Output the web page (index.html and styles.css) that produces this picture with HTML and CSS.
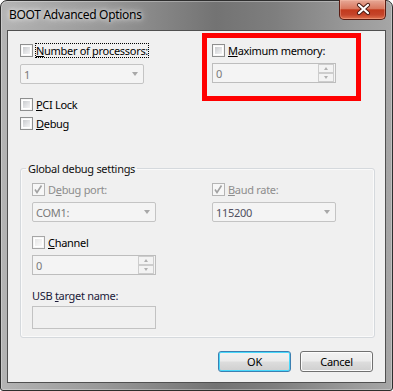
FILE: index.html
```html
<!DOCTYPE html>
<html lang="en">
<head>
    <meta charset="UTF-8">
    <title>BOOT Advanced Options</title>
    <link rel="stylesheet" href="styles.css">
</head>
<body>
    <div class="window">
        <div class="titlebar">
            <span class="title">BOOT Advanced Options</span>
            <div class="close">
                <svg width="45" height="19" viewBox="0 0 45 19">
                    <path d="M19 5 L28 13 M28 5 L19 13" stroke="#4a1c14" stroke-width="4.2" stroke-linecap="round" fill="none"/>
                    <path d="M19 5 L28 13 M28 5 L19 13" stroke="#ffffff" stroke-width="2.2" stroke-linecap="round" fill="none"/>
                </svg>
            </div>
        </div>
        <div class="client">
            <div class="top-row">
                <div class="col-left">
                    <label class="check">
                        <span class="box"></span>
                        <span class="text focus"><u>N</u>umber of processors:</span>
                    </label>
                    <div class="combo gap6">
                        <span>1</span>
                        <i class="arrow"></i>
                    </div>
                    <label class="check gap13">
                        <span class="box"></span>
                        <span class="text"><u>P</u>CI Lock</span>
                    </label>
                    <label class="check gap4">
                        <span class="box"></span>
                        <span class="text"><u>D</u>ebug</span>
                    </label>
                </div>
                <div class="highlight">
                    <label class="check">
                        <span class="box"></span>
                        <span class="text"><u>M</u>aximum memory:</span>
                    </label>
                    <div class="spin gap5">
                        <span>0</span>
                        <span class="spin-btns">
                            <i class="up"></i>
                            <i class="down"></i>
                        </span>
                    </div>
                </div>
            </div>

            <fieldset class="group">
                <legend>Global debug settings</legend>
                <div class="group-grid">
                    <div class="col">
                        <label class="check disabled">
                            <span class="box checked">
                                <svg width="11" height="11" viewBox="0 0 11 11"><path d="M2 5.5 L4 8.5 L8.5 1.5" stroke="#a2a2a2" stroke-width="1.6" fill="none"/></svg>
                            </span>
                            <span class="text">D<u>e</u>bug port:</span>
                        </label>
                        <div class="combo gap5">
                            <span>COM1:</span>
                            <i class="arrow"></i>
                        </div>
                        <label class="check gap13">
                            <span class="box light"></span>
                            <span class="text"><u>C</u>hannel</span>
                        </label>
                        <div class="spin gap5">
                            <span>0</span>
                            <span class="spin-btns">
                                <i class="up"></i>
                                <i class="down"></i>
                            </span>
                        </div>
                        <div class="label gap13">USB <u>t</u>arget name:</div>
                        <div class="textbox"></div>
                    </div>
                    <div class="col">
                        <label class="check disabled">
                            <span class="box checked">
                                <svg width="11" height="11" viewBox="0 0 11 11"><path d="M2 5.5 L4 8.5 L8.5 1.5" stroke="#a2a2a2" stroke-width="1.6" fill="none"/></svg>
                            </span>
                            <span class="text"><u>B</u>aud rate:</span>
                        </label>
                        <div class="combo gap5 dark">
                            <span>115200</span>
                            <i class="arrow"></i>
                        </div>
                    </div>
                </div>
            </fieldset>

            <div class="buttons">
                <button class="btn default">OK</button>
                <button class="btn">Cancel</button>
            </div>
        </div>
    </div>
</body>
</html>
```

FILE: styles.css
```css
* {
    box-sizing: border-box;
}
body {
    margin: 0;
    padding: 0;
    background: #ffffff;
    font-family: "Noto Sans", "Open Sans", sans-serif;
    font-size: 11px;
    letter-spacing: -0.3px;
    color: #000;
}
u {
    text-decoration: underline;
    text-underline-offset: 1px;
}
.window {
    width: 393px;
    height: 391px;
    border: 1px solid #2e2e2e;
    border-radius: 7px 7px 3px 3px;
    background: linear-gradient(90deg, #b4b4b4 0%, #9a9a9a 25%, #737373 55%, #7e7e7e 70%, #9a9a9a 90%, #a6a6a6 100%);
    box-shadow: inset 0 0 0 1px rgba(255, 255, 255, 0.3);
    padding: 0 6px 7px;
    display: flex;
    flex-direction: column;
}
.titlebar {
    height: 29px;
    display: flex;
    justify-content: space-between;
    align-items: flex-start;
    padding-left: 2px;
}
.title {
    margin-top: 6px;
    font-size: 12px;
    line-height: 15px;
    letter-spacing: -0.3px;
    color: #000;
    text-shadow: 0 0 8px rgba(255, 255, 255, 0.9), 0 0 4px rgba(255, 255, 255, 0.8);
}
.close {
    margin-top: -1px;
    width: 47px;
    height: 20px;
    border: 1px solid #5a1c12;
    border-top: none;
    border-radius: 0 0 5px 5px;
    background: linear-gradient(#e6a897 0%, #d9785f 45%, #c23a1d 52%, #c5442a 78%, #e0734f 100%);
    box-shadow: inset 0 0 0 1px rgba(255, 200, 180, 0.35);
}
.close svg {
    display: block;
}
.client {
    flex: 1;
    border: 1px solid #505050;
    background: #f0f0f0;
    padding: 2px 0 0 12px;
}
.top-row {
    display: flex;
}
.col-left {
    width: 182px;
    padding-top: 10px;
}
.highlight {
    width: 159px;
    border: 5px solid #ff0000;
    padding: 5px 0 13px 5px;
    align-self: flex-start;
}
.gap4 { margin-top: 4px; }
.gap5 { margin-top: 5px; }
.gap6 { margin-top: 6px; }
.gap13 { margin-top: 13px; }

.check {
    display: flex;
    align-items: center;
    height: 15px;
    line-height: 15px;
}
.check .text {
    margin-left: 2px;
    padding: 0 1px;
    height: 15px;
}
.check .focus {
    outline: 1px dotted #000;
    outline-offset: -1px;
}
.check.disabled .text {
    color: #8d8d8d;
}
.box {
    width: 13px;
    height: 13px;
    border: 1px solid #8e8f8f;
    background: #f6f6f6;
    padding: 1px;
    display: flex;
}
.box::before {
    content: "";
    flex: 1;
    border: 1px solid #ffffff;
    background: linear-gradient(135deg, #c9cbce 0%, #e4e5e7 60%, #f3f3f3 100%);
}
.box.light {
    border-color: #a6a6a6;
}
.box.light::before {
    background: linear-gradient(135deg, #e6e6e6, #fafafa);
}
.box.checked {
    border-color: #b5b5b5;
    padding: 0;
    background: #f7f7f7;
}
.box.checked::before {
    display: none;
}
.combo,
.spin {
    width: 124px;
    height: 20px;
    border: 1px solid #c4c4c4;
    border-radius: 2px;
    background: #f4f4f4;
    display: flex;
    align-items: center;
    justify-content: space-between;
    padding-left: 3px;
    color: #7a7a7a;
    line-height: 15px;
}
.combo.dark {
    color: #505060;
}
.arrow {
    width: 0;
    height: 0;
    margin-right: 5px;
    border-left: 3px solid transparent;
    border-right: 3px solid transparent;
    border-top: 4px solid #a8a8a8;
}
.spin {
    border-radius: 0;
    border-color: #bdbdbd;
    padding-right: 1px;
}
.spin-btns {
    display: flex;
    flex-direction: column;
    gap: 0;
    height: 18px;
}
.spin-btns i {
    width: 16px;
    height: 9px;
    border: 1px solid #cdcdcd;
    background: #f3f3f3;
    display: flex;
    align-items: center;
    justify-content: center;
}
.spin-btns i::before {
    content: "";
    border-left: 2.5px solid transparent;
    border-right: 2.5px solid transparent;
}
.spin-btns .up::before {
    border-bottom: 3px solid #b0b0b0;
}
.spin-btns .down::before {
    border-top: 3px solid #b0b0b0;
}
.group {
    width: 355px;
    margin: 30px 0 0 0;
    padding: 6px 0 8px 11px;
    border: 1px solid #d5d9dd;
    border-radius: 3px;
    box-shadow: inset 0 0 0 1px #fafafa;
}
.group legend {
    margin-left: -6px;
    padding: 0 2px;
    line-height: 15px;
    color: #101010;
}
.group-grid {
    display: grid;
    grid-template-columns: 180px 1fr;
}
.label {
    line-height: 15px;
    height: 15px;
    color: #1a1a3a;
}
.textbox {
    margin-top: 3px;
    width: 124px;
    height: 23px;
    border: 1px solid #c2c2c2;
    background: #f0f0f0;
}
.buttons {
    display: flex;
    justify-content: flex-end;
    gap: 9px;
    margin-top: 13px;
    padding-right: 12px;
}
.btn {
    width: 73px;
    height: 21px;
    border: 1px solid #707070;
    border-radius: 3px;
    background: linear-gradient(#f2f2f2 0%, #ebebeb 48%, #dddddd 52%, #cfcfcf 100%);
    box-shadow: inset 0 0 0 1px #fcfcfc;
    font-family: "Noto Sans", "Open Sans", sans-serif;
    font-size: 11px;
    letter-spacing: -0.3px;
    color: #000;
    padding: 0;
    line-height: 17px;
}
.btn.default {
    border-color: #3c7fb1;
    box-shadow: inset 0 0 0 1px #48d8fb;
}
```
